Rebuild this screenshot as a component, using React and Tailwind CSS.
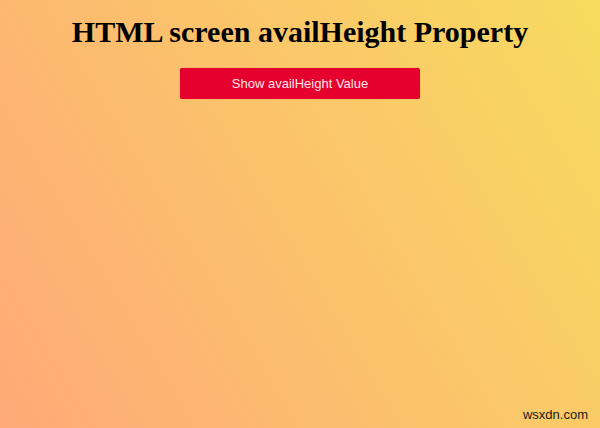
export default function App() {
  return (
    <div className="relative w-[600px] h-[428px] overflow-hidden bg-[linear-gradient(59deg,#ffa978,#f7db5f)] font-['Liberation_Serif',serif]">
      {/* heading */}
      <div className="pt-[13px] flex flex-col items-center">
        <h1 className="text-[30px] leading-[38px] font-bold text-black">
          HTML screen availHeight Property
        </h1>

        {/* button */}
        <button className="mt-[17px] w-[240px] h-[31px] rounded-[2px] bg-[#e6002d] text-[#fbe3e8] text-[13px] font-['Liberation_Sans',sans-serif] shadow-[0_0_1px_rgba(0,0,0,0.3)]">
          Show availHeight Value
        </button>
      </div>

      {/* watermark */}
      <div className="absolute right-[12px] bottom-[4px] text-[13px] text-[#1a1a1a] font-['Liberation_Sans',sans-serif]">
        wsxdn.com
      </div>
    </div>
  );
}
